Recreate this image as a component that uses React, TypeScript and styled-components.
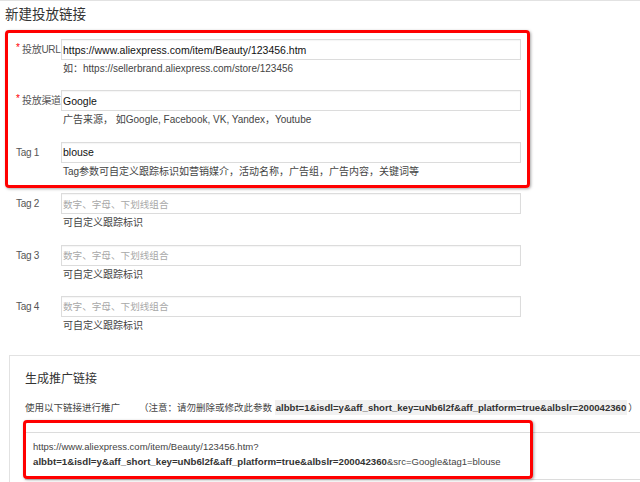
import React from 'react';
import styled, { createGlobalStyle } from 'styled-components';

const GlobalStyle = createGlobalStyle`
  html, body { margin: 0; padding: 0; background: #fff; overflow: hidden; }
  body { font-family: "Liberation Sans", Arial, "Noto Sans CJK SC", sans-serif; }
  * { box-sizing: border-box; }
`;

const Page = styled.div`
  width: 640px;
  height: 482px;
  overflow: hidden;
  border-top: 1px solid #e2e2e2;
`;

const Title = styled.h1`
  margin: 4px 0 0 5px;
  height: 20px;
  font-size: 13.5px;
  line-height: 20px;
  font-weight: normal;
  color: #333;
`;

const Form = styled.div`
  margin-top: 14px;
  padding-left: 16px;
  display: flex;
  flex-direction: column;
  gap: 14.4px;
`;

const Highlight = styled.div`
  position: relative;
  display: flex;
  flex-direction: column;
  gap: 14.4px;
  &::after {
    content: '';
    position: absolute;
    left: -11px;
    top: -9px;
    width: 519px;
    height: 152px;
    border: 3px solid #f00;
    border-radius: 4px;
    box-shadow: 1px 1px 3px rgba(0, 0, 0, 0.35);
    pointer-events: none;
  }
`;

const Row = styled.div`
  display: flex;
  align-items: flex-start;
`;

const Label = styled.div`
  width: 45px;
  height: 21px;
  flex: none;
  font-size: 10px;
  letter-spacing: -0.3px;
  line-height: 21px;
  color: #555;
  white-space: nowrap;
`;

const Star = styled.span`
  display: inline-block;
  width: 6px;
  color: #f00;
  font-size: 10px;
  position: relative;
  top: -2px;
`;

const Field = styled.div`
  display: flex;
  flex-direction: column;
  width: 460px;
`;

const Input = styled.input`
  height: 21px;
  width: 100%;
  margin: 0;
  border: 1px solid #dcdcdc;
  box-shadow: inset 0 1px 1px rgba(0, 0, 0, 0.04);
  padding: 0 1px;
  font-family: "Liberation Sans", Arial, "Noto Sans CJK SC", sans-serif;
  font-size: 10.5px;
  color: #111;
  background: #fff;
  outline: none;
  &::placeholder {
    color: #a8a8a8;
    font-size: 9.6px;
  }
`;

const Hint = styled.div`
  margin-top: 2px;
  height: 14px;
  padding-left: 2px;
  font-size: 10px;
  line-height: 14px;
  color: #444;
  white-space: nowrap;
`;

const Card = styled.div`
  margin: 22px 0 0 9px;
  width: 700px;
  height: 200px;
  border: 1px solid #e2e2e2;
  padding: 14px 0 0 15px;
`;

const CardTitle = styled.h2`
  margin: 0;
  height: 18px;
  font-size: 12px;
  line-height: 18px;
  font-weight: normal;
  color: #333;
`;

const Note = styled.div`
  margin-top: 11px;
  height: 18px;
  font-size: 9.5px;
  line-height: 18px;
  color: #444;
  white-space: nowrap;
`;

const Caution = styled.span`
  margin-left: 19px;
`;

const Code = styled.span`
  font-weight: bold;
  font-size: 9.6px;
  color: #333;
  background: #f1f1f1;
  padding: 2px 1px;
  margin-right: 1px;
`;

const Output = styled.div`
  position: relative;
  margin-top: 15px;
  width: 680px;
  border: 1px solid #dcdcdc;
  padding: 6px 8px 10px 7px;
  font-size: 9.5px;
  line-height: 15px;
  color: #444;
  white-space: nowrap;
  &::after {
    content: '';
    position: absolute;
    left: -3px;
    top: -13px;
    width: 504px;
    height: 53px;
    border: 3px solid #f00;
    border-radius: 4px;
    box-shadow: 1px 1px 3px rgba(0, 0, 0, 0.35);
    pointer-events: none;
  }
`;

const OutputLine = styled.div`
  height: 15px;
`;

const OutputCode = styled.b`
  font-size: 9.7px;
  color: #333;
`;

type FieldRowProps = {
  label: string;
  required?: boolean;
  value?: string;
  placeholder?: string;
  hint: string;
};

const FieldRow = ({ label, required, value, placeholder, hint }: FieldRowProps) => (
  <Row>
    <Label>
      {required && <Star>*</Star>}
      {label}
    </Label>
    <Field>
      <Input readOnly defaultValue={value} placeholder={placeholder} />
      <Hint>{hint}</Hint>
    </Field>
  </Row>
);

const PARAMS = 'albbt=1&isdl=y&aff_short_key=uNb6l2f&aff_platform=true&albslr=200042360';
const PH = '数字、字母、下划线组合';

export default function App() {
  return (
    <>
      <GlobalStyle />
      <Page>
        <Title>新建投放链接</Title>
        <Form>
          <Highlight>
            <FieldRow
              required
              label="投放URL"
              value="https://www.aliexpress.com/item/Beauty/123456.htm"
              hint="如：https://sellerbrand.aliexpress.com/store/123456"
            />
            <FieldRow
              required
              label="投放渠道"
              value="Google"
              hint="广告来源， 如Google, Facebook, VK, Yandex，Youtube"
            />
            <FieldRow
              label="Tag 1"
              value="blouse"
              hint="Tag参数可自定义跟踪标识如营销媒介，活动名称，广告组，广告内容，关键词等"
            />
          </Highlight>
          <FieldRow label="Tag 2" placeholder={PH} hint="可自定义跟踪标识" />
          <FieldRow label="Tag 3" placeholder={PH} hint="可自定义跟踪标识" />
          <FieldRow label="Tag 4" placeholder={PH} hint="可自定义跟踪标识" />
        </Form>
        <Card>
          <CardTitle>生成推广链接</CardTitle>
          <Note>
            使用以下链接进行推广
            <Caution>
              （注意：请勿删除或修改此参数 <Code>{PARAMS}</Code>）
            </Caution>
          </Note>
          <Output>
            <OutputLine>https://www.aliexpress.com/item/Beauty/123456.htm?</OutputLine>
            <OutputLine>
              <OutputCode>{PARAMS}</OutputCode>&amp;src=Google&amp;tag1=blouse
            </OutputLine>
          </Output>
        </Card>
      </Page>
    </>
  );
}
